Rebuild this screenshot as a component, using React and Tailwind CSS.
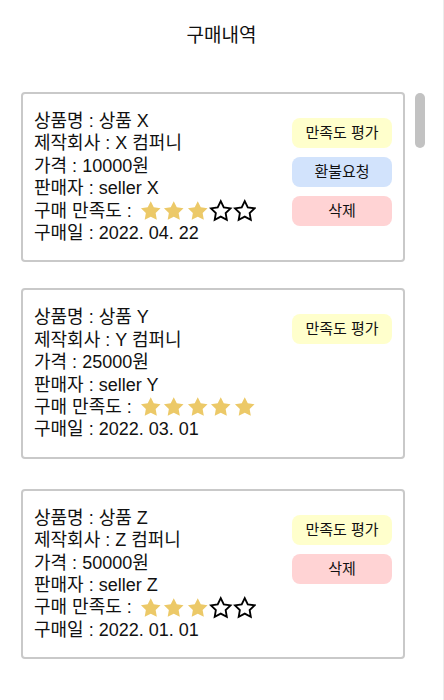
import React from 'react';

const ORDERS = [
  {
    name: '상품 X',
    company: 'X 컴퍼니',
    price: '10000원',
    seller: 'seller X',
    rating: 3,
    date: '2022. 04. 22',
    actions: ['rate', 'refund', 'delete'],
    gap: 'mt-[92px]',
  },
  {
    name: '상품 Y',
    company: 'Y 컴퍼니',
    price: '25000원',
    seller: 'seller Y',
    rating: 5,
    date: '2022. 03. 01',
    actions: ['rate'],
    gap: 'mt-[26px]',
  },
  {
    name: '상품 Z',
    company: 'Z 컴퍼니',
    price: '50000원',
    seller: 'seller Z',
    rating: 3,
    date: '2022. 01. 01',
    actions: ['rate', 'delete'],
    gap: 'mt-[30px]',
  },
];

const BUTTONS = {
  rate: { label: '만족도 평가', cls: 'bg-[#ffffcc]' },
  refund: { label: '환불요청', cls: 'bg-[#d2e3fc]' },
  delete: { label: '삭제', cls: 'bg-[#ffd3d4]' },
};

const STAR = 'M12 2l3.09 6.26L22 9.27l-5 4.87 1.18 6.88L12 17.77l-6.18 3.25L7 14.14 2 9.27l6.91-1.01L12 2z';

const Stars = ({ value }) => (
  <span className="ml-[7px] inline-flex items-center">
    {[1, 2, 3, 4, 5].map((n) => (
      <span key={n} className="flex h-[22px] w-[23.5px] items-center justify-center">
        {n <= value ? (
          <svg width="24" height="24" viewBox="0 0 24 24">
            <path d={STAR} fill="#ecc968" />
          </svg>
        ) : (
          <svg width="26" height="26" viewBox="0 0 24 24">
            <path d={STAR} fill="none" stroke="#000" strokeWidth="1.9" />
          </svg>
        )}
      </span>
    ))}
  </span>
);

const OrderCard = ({ order }) => (
  <div
    className={`${order.gap} ml-[21px] flex w-[384px] justify-between rounded-[4px] border-2 border-[#c9c9c9] py-[16px] pl-[11px] pr-[11px]`}
  >
    <div className="text-[18px] leading-[22.4px] text-[#111]">
      <div>상품명 : {order.name}</div>
      <div>제작회사 : {order.company}</div>
      <div>가격 : {order.price}</div>
      <div>판매자 : {order.seller}</div>
      <div className="flex h-[22.4px] items-center">
        구매 만족도 :<Stars value={order.rating} />
      </div>
      <div>구매일 : {order.date}</div>
    </div>
    <div className="mt-[8px] flex flex-col gap-[9px]">
      {order.actions.map((a) => (
        <button
          key={a}
          className={`${BUTTONS[a].cls} h-[30px] w-[100px] rounded-[8px] text-[15px] text-[#111]`}
        >
          {BUTTONS[a].label}
        </button>
      ))}
    </div>
  </div>
);

export default function App() {
  return (
    <div
      className="relative h-[700px] w-[444px] overflow-hidden border-r border-[#ececec] bg-white"
      style={{ fontFamily: '"Liberation Sans", "Noto Sans CJK KR", sans-serif' }}
    >
      <h1 className="pt-[23px] text-center text-[19px] leading-[26px] text-[#111]">구매내역</h1>
      <div className="-mt-[49px]">
        {ORDERS.map((o) => (
          <OrderCard key={o.name} order={o} />
        ))}
      </div>
      <div className="absolute left-[415px] top-[93px] h-[55px] w-[10px] rounded-full bg-[#c2c2c2]" />
    </div>
  );
}
